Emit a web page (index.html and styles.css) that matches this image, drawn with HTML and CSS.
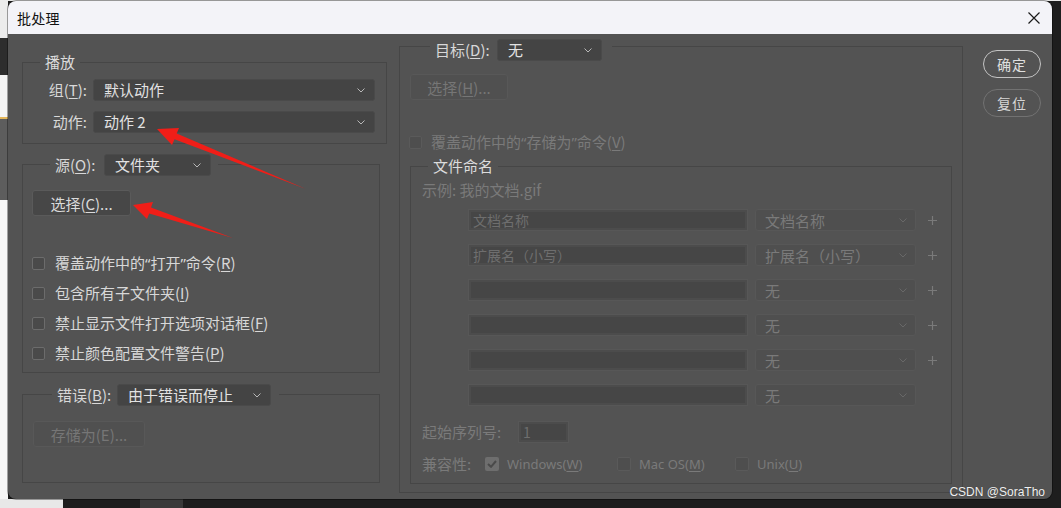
FILE: index.html
```html
<!DOCTYPE html>
<html lang="zh-CN">
<head>
<meta charset="utf-8">
<title>批处理</title>
<link rel="stylesheet" href="styles.css">
</head>
<body>
<div class="dialog">
  <div class="titlebar">
    <span class="title">批处理</span>
    <svg class="close" width="12" height="12" viewBox="0 0 12 12"><path d="M0.5 0.5L11.5 11.5M11.5 0.5L0.5 11.5" stroke="#1a1a1a" stroke-width="1.2" fill="none"/></svg>
  </div>
  <div class="content">
    <div class="col-left">
      <section class="group g-play">
        <div class="legend legend-text-only"><span class="legend-text">播放</span></div>
        <div class="form-grid">
          <span class="lbl">组(<u>T</u>):</span>
          <div class="select"><span>默认动作</span><svg class="chev" width="8" height="5" viewBox="0 0 8 5"><path d="M0.5 0.5L4 4L7.5 0.5" fill="none" stroke="currentColor"/></svg></div>
          <span class="lbl">动作:</span>
          <div class="select"><span>动作 2</span><svg class="chev" width="8" height="5" viewBox="0 0 8 5"><path d="M0.5 0.5L4 4L7.5 0.5" fill="none" stroke="currentColor"/></svg></div>
        </div>
      </section>

      <section class="group g-src">
        <div class="legend legend-src">
          <span class="lbl lbl-src">源(<u>O</u>):</span>
          <div class="select sel-src"><span>文件夹</span><svg class="chev" width="8" height="5" viewBox="0 0 8 5"><path d="M0.5 0.5L4 4L7.5 0.5" fill="none" stroke="currentColor"/></svg></div>
        </div>
        <div class="btn btn-choose">选择(<u>C</u>)...</div>
        <div class="checklist">
          <div class="check-row"><span class="cb"></span><span class="lbl">覆盖动作中的<span class="q">“</span>打开<span class="q">”</span>命令(<u>R</u>)</span></div>
          <div class="check-row"><span class="cb"></span><span class="lbl">包含所有子文件夹(<u>I</u>)</span></div>
          <div class="check-row"><span class="cb"></span><span class="lbl">禁止显示文件打开选项对话框(<u>F</u>)</span></div>
          <div class="check-row"><span class="cb"></span><span class="lbl">禁止颜色配置文件警告(<u>P</u>)</span></div>
        </div>
      </section>

      <section class="group g-err">
        <div class="legend legend-err">
          <span class="lbl lbl-err">错误(<u>B</u>):</span>
          <div class="select sel-err"><span>由于错误而停止</span><svg class="chev" width="8" height="5" viewBox="0 0 8 5"><path d="M0.5 0.5L4 4L7.5 0.5" fill="none" stroke="currentColor"/></svg></div>
        </div>
        <div class="btn btn-disabled btn-save">存储为(E)...</div>
      </section>
    </div>

    <div class="col-right">
      <section class="group g-dest">
        <div class="legend legend-dest">
          <span class="lbl lbl-dest">目标(<u>D</u>):</span>
          <div class="select sel-dest"><span>无</span><svg class="chev" width="8" height="5" viewBox="0 0 8 5"><path d="M0.5 0.5L4 4L7.5 0.5" fill="none" stroke="currentColor"/></svg></div>
        </div>
        <div class="btn btn-disabled btn-h">选择(<u>H</u>)...</div>
        <div class="check-row dis-row"><span class="cb cb-dis"></span><span class="lbl dis">覆盖动作中的<span class="q">“</span>存储为<span class="q">”</span>命令(<u>V</u>)</span></div>

        <section class="group g-name">
          <div class="legend legend-text-only"><span class="legend-text">文件命名</span></div>
          <div class="example dis">示例: 我的文档.gif</div>
          <div class="name-rows">
            <div class="name-row">
              <div class="tinput"><span>文档名称</span></div>
              <div class="dselect"><span>文档名称</span><svg class="chev" width="8" height="5" viewBox="0 0 8 5"><path d="M0.5 0.5L4 4L7.5 0.5" fill="none" stroke="currentColor"/></svg></div>
              <svg class="plus" width="9" height="9" viewBox="0 0 9 9"><path d="M4.5 0V9M0 4.5H9" stroke="currentColor" stroke-width="1.2"/></svg>
            </div>
            <div class="name-row">
              <div class="tinput"><span>扩展名（小写）</span></div>
              <div class="dselect"><span>扩展名（小写）</span><svg class="chev" width="8" height="5" viewBox="0 0 8 5"><path d="M0.5 0.5L4 4L7.5 0.5" fill="none" stroke="currentColor"/></svg></div>
              <svg class="plus" width="9" height="9" viewBox="0 0 9 9"><path d="M4.5 0V9M0 4.5H9" stroke="currentColor" stroke-width="1.2"/></svg>
            </div>
            <div class="name-row">
              <div class="tinput"></div>
              <div class="dselect"><span>无</span><svg class="chev" width="8" height="5" viewBox="0 0 8 5"><path d="M0.5 0.5L4 4L7.5 0.5" fill="none" stroke="currentColor"/></svg></div>
              <svg class="plus" width="9" height="9" viewBox="0 0 9 9"><path d="M4.5 0V9M0 4.5H9" stroke="currentColor" stroke-width="1.2"/></svg>
            </div>
            <div class="name-row">
              <div class="tinput"></div>
              <div class="dselect"><span>无</span><svg class="chev" width="8" height="5" viewBox="0 0 8 5"><path d="M0.5 0.5L4 4L7.5 0.5" fill="none" stroke="currentColor"/></svg></div>
              <svg class="plus" width="9" height="9" viewBox="0 0 9 9"><path d="M4.5 0V9M0 4.5H9" stroke="currentColor" stroke-width="1.2"/></svg>
            </div>
            <div class="name-row">
              <div class="tinput"></div>
              <div class="dselect"><span>无</span><svg class="chev" width="8" height="5" viewBox="0 0 8 5"><path d="M0.5 0.5L4 4L7.5 0.5" fill="none" stroke="currentColor"/></svg></div>
              <svg class="plus" width="9" height="9" viewBox="0 0 9 9"><path d="M4.5 0V9M0 4.5H9" stroke="currentColor" stroke-width="1.2"/></svg>
            </div>
            <div class="name-row">
              <div class="tinput"></div>
              <div class="dselect"><span>无</span><svg class="chev" width="8" height="5" viewBox="0 0 8 5"><path d="M0.5 0.5L4 4L7.5 0.5" fill="none" stroke="currentColor"/></svg></div>
            </div>
          </div>
          <div class="seq-row">
            <span class="lbl dis seq-lbl">起始序列号:</span>
            <div class="tinput seq-input"><span>1</span></div>
          </div>
          <div class="compat-row">
            <span class="lbl dis compat-lbl">兼容性:</span>
            <div class="opt opt-win"><span class="cb cb-checked"><svg width="10" height="8" viewBox="0 0 10 8"><path d="M1 4L4 6.8L9 1" fill="none" stroke="#4a4a4a" stroke-width="2"/></svg></span><span class="lat dis">Windows(<u>W</u>)</span></div>
            <div class="opt opt-mac"><span class="cb cb-dis"></span><span class="lat dis">Mac OS(<u>M</u>)</span></div>
            <div class="opt"><span class="cb cb-dis"></span><span class="lat dis">Unix(<u>U</u>)</span></div>
          </div>
        </section>
      </section>
    </div>

    <div class="col-buttons">
      <div class="pill pill-ok">确定</div>
      <div class="pill pill-reset">复位</div>
    </div>
  </div>
  <div class="watermark">CSDN @SoraTho</div>
</div>

<svg class="annot" width="1061" height="508" viewBox="0 0 1061 508">
  <polygon points="157,129 179,128 176.7,133.6 306,189 174.5,139.2 172,145" fill="#f01e18"/>
  <polygon points="133,205 153,202 151,207.6 233,238 149.2,213.4 147,219" fill="#f01e18"/>
</svg>
</body>
</html>
```

FILE: styles.css
```css
* { box-sizing: border-box; }

html, body { margin: 0; }

body {
  width: 1061px;
  height: 508px;
  overflow: hidden;
  position: relative;
  padding: 1px 0 0 8px;
  font-family: "Noto Sans CJK SC", "Noto Sans", sans-serif;
  background:
    linear-gradient(#e8e8e8, #e8e8e8) 0 499px / 63px 9px no-repeat,
    linear-gradient(#3a3a3a, #3a3a3a) 140px 499px / 43px 9px no-repeat,
    linear-gradient(to bottom, #ececec 0 38px, #2d2d2d 38px 75px, #f4f4f4 75px 117px, #e3b65a 117px 119px, #5d5d5d 119px 200px, #f6f6f6 200px) 0 0 / 8px 100% no-repeat,
    linear-gradient(#e9e9e9, #e9e9e9) 0 0 / 100% 1px no-repeat,
    #1e1e1e;
}

u { text-decoration: underline; text-underline-offset: 2px; }

.q { font-family: "Noto Sans", "Liberation Sans", sans-serif; }

.dialog {
  width: 1044px;
  height: 498px;
  border-radius: 8px;
  overflow: hidden;
  background: #535353;
  display: flex;
  flex-direction: column;
  position: relative;
  box-shadow: 0 0 0 1px rgba(0, 0, 0, 0.35);
}

.titlebar {
  flex: none;
  height: 33px;
  background: #f3f3f8;
  display: flex;
  align-items: center;
  justify-content: space-between;
  padding: 0 12px 0 9px;
}

.title {
  font-size: 14px;
  color: #111;
  letter-spacing: 0.3px;
}

.content {
  flex: 1;
  display: flex;
  align-items: flex-start;
  padding: 0 11px 0 14px;
}

/* groups */
.group {
  border: 1px solid #464646;
}

.legend {
  display: flex;
  align-items: center;
  width: max-content;
  background: #535353;
  padding: 0 5px;
}

.legend-text-only {
  height: 18px;
  margin: -10px 0 0 17px;
}

.legend-text {
  font-size: 15px;
  line-height: 18px;
  color: #dcdcdc;
}

.lbl {
  font-size: 15px;
  line-height: 20px;
  color: #d8d8d8;
  white-space: nowrap;
}

.dis { color: #7a7a7a; }

.lat {
  font-family: "Noto Sans", "Open Sans", sans-serif;
  font-size: 13px;
  line-height: 20px;
  white-space: nowrap;
}

/* selects */
.select {
  height: 22px;
  display: flex;
  align-items: center;
  justify-content: space-between;
  padding: 0 9px 0 10px;
  background: #444444;
  border: 1px solid #4a4a4a;
  border-radius: 3px;
  color: #e2e2e2;
  font-size: 15px;
  line-height: 20px;
  white-space: nowrap;
}

.chev { color: #b8b8b8; flex: none; }

/* left column */
.col-left {
  width: 365px;
  display: flex;
  flex-direction: column;
}

.g-play { margin-top: 28px; }

.form-grid {
  display: grid;
  grid-template-columns: 64px 282px;
  column-gap: 6px;
  row-gap: 10px;
  margin-top: 8px;
  padding-bottom: 10px;
  align-items: center;
}

.form-grid .lbl { justify-self: end; }

.g-src { width: 358px; margin-top: 20px; padding-bottom: 4px; }

.legend-src {
  height: 22px;
  margin: -11px 0 0 27px;
  padding: 0 7px 0 5px;
}

.lbl-src { width: 49px; }

.sel-src { width: 107px; }

.btn {
  height: 26px;
  display: flex;
  align-items: center;
  justify-content: center;
  background: #474747;
  border: 1px solid #5a5a5a;
  border-radius: 3px;
  font-size: 15px;
  color: #dadada;
  white-space: nowrap;
}

.btn-disabled {
  background: #505050;
  border-color: #585858;
  color: #767676;
}

.btn-choose { width: 99px; margin: 14px 0 0 9px; }

.checklist { margin-top: 32px; padding-left: 9px; }

.check-row {
  height: 30px;
  display: flex;
  align-items: center;
  gap: 10px;
}

.cb {
  width: 13px;
  height: 13px;
  flex: none;
  border: 1px solid #6c6c6c;
  background: #4a4a4a;
  border-radius: 2px;
  display: flex;
  align-items: center;
  justify-content: center;
}

.cb-dis {
  border-color: #5a5a5a;
  background: #4e4e4e;
}

.cb-checked {
  width: 14px;
  height: 14px;
  border: none;
  background: #6e6e6e;
}

.g-err { width: 358px; margin-top: 21px; }

.legend-err {
  height: 22px;
  margin: -11px 0 0 29px;
  padding: 0 8px 0 5px;
}

.lbl-err { width: 60px; }

.sel-err { width: 154px; }

.btn-save { width: 112px; margin: 15px 0 35px 10px; }

/* right column */
.col-right {
  width: 564px;
  margin-left: 12px;
}

.g-dest { margin-top: 12px; }

.legend-dest {
  height: 22px;
  margin: -8px 0 0 30px;
  padding: 0 10px 0 5px;
}

.lbl-dest { width: 62px; }

.sel-dest { width: 105px; }

.btn-h { width: 98px; margin: 13px 0 0 10px; }

.dis-row {
  height: 20px;
  margin-top: 32px;
  padding-left: 9px;
  gap: 9px;
}

.g-name { margin: 14px 10px 8px 10px; padding-bottom: 9px; }

.example {
  margin-top: 5px;
  padding-left: 11px;
  font-size: 15px;
  line-height: 20px;
}

.name-rows {
  margin-top: 9px;
  display: flex;
  flex-direction: column;
  gap: 13px;
}

.name-row {
  height: 22px;
  display: flex;
  align-items: center;
  padding-left: 57px;
}

.tinput {
  width: 280px;
  height: 22px;
  flex: none;
  display: flex;
  align-items: center;
  padding-left: 4px;
  background: #464646;
  border: 1px solid #575757;
  box-shadow: inset 0 0 0 2px #4c4c4c;
  font-size: 14px;
  color: #6e6e6e;
  white-space: nowrap;
}

.dselect {
  width: 161px;
  height: 22px;
  margin-left: 7px;
  flex: none;
  display: flex;
  align-items: center;
  justify-content: space-between;
  padding: 0 8px 0 9px;
  background: #4f4f4f;
  border: 1px solid #575757;
  border-radius: 3px;
  font-size: 15px;
  color: #7a7a7a;
  white-space: nowrap;
}

.dselect .chev { color: #686868; }

.plus { margin-left: 12px; color: #7a7a7a; flex: none; }

.seq-row {
  margin-top: 15px;
  height: 22px;
  display: flex;
  align-items: center;
  padding-left: 11px;
}

.seq-lbl { width: 96px; }

.seq-input { width: 51px; }

.compat-row {
  margin-top: 11px;
  height: 20px;
  display: flex;
  align-items: center;
  padding-left: 11px;
}

.compat-lbl { width: 63px; }

.opt {
  display: flex;
  align-items: center;
  gap: 8px;
}

.opt .cb { width: 14px; height: 14px; }

.opt-win { width: 132px; }
.opt-mac { width: 118px; }

/* buttons */
.col-buttons {
  width: 58px;
  margin-left: 20px;
  margin-top: 16px;
  display: flex;
  flex-direction: column;
  gap: 11px;
}

.pill {
  height: 28px;
  border-radius: 14px;
  display: flex;
  align-items: center;
  justify-content: center;
  font-size: 14px;
  color: #e0e0e0;
  letter-spacing: 1px;
}

.pill-ok { border: 1px solid #c4c4c4; }
.pill-reset { border: 1px solid #727272; color: #d6d6d6; }

.watermark {
  position: absolute;
  right: 7px;
  bottom: 0;
  font-family: "Liberation Sans", Arial, sans-serif;
  font-size: 12px;
  line-height: 14px;
  color: #f0f0f0;
  text-shadow: 0 0 1px #333;
}

.annot {
  position: absolute;
  left: 0;
  top: 0;
  pointer-events: none;
}
```
